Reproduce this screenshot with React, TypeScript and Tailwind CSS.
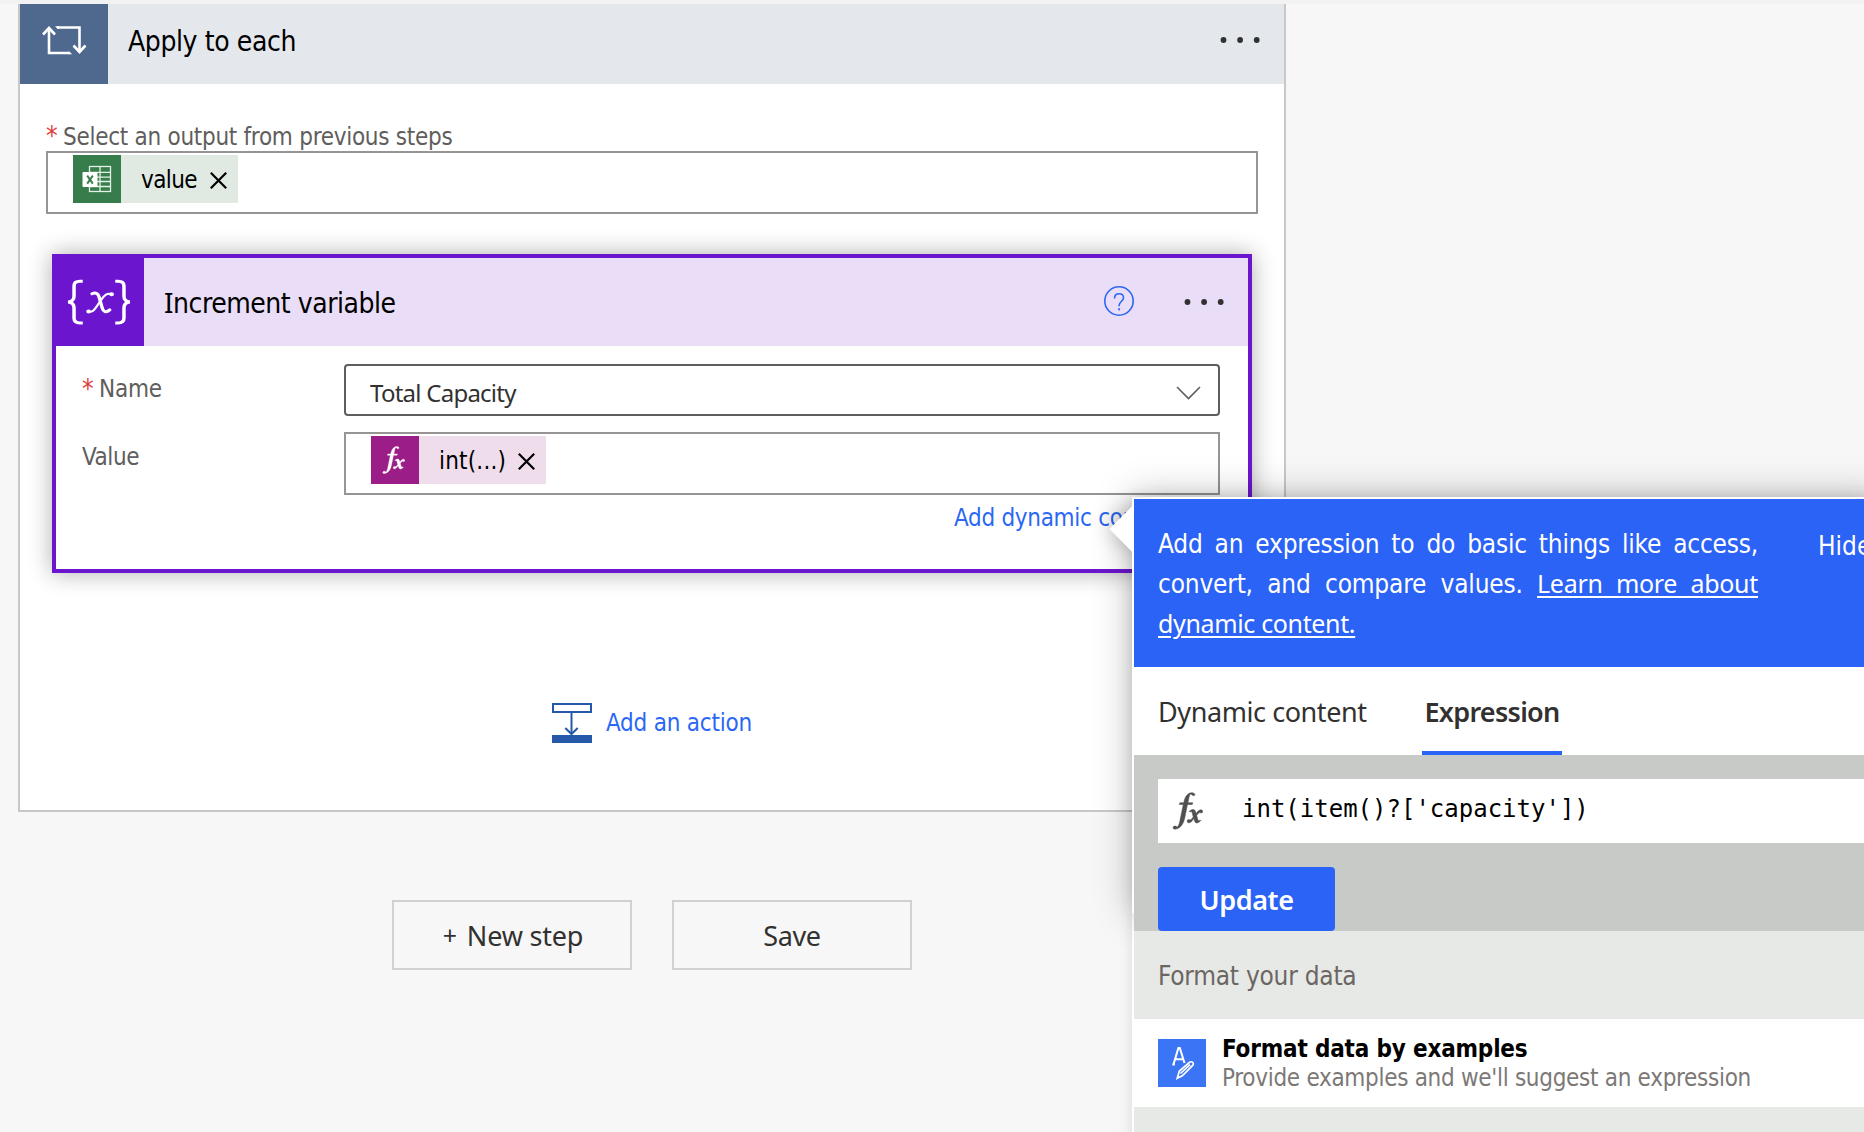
import React from "react";

const tahoma = "font-['DejaVu_Sans_Condensed','DejaVu_Sans',sans-serif] [font-stretch:condensed]";
const segoe = "font-['Noto_Sans','Open_Sans',sans-serif]";

function Dots({ className }: { className: string }) {
  return (
    <svg width="40" height="6" viewBox="0 0 40 6" className={className}>
      <circle cx="3.5" cy="3" r="2.9" />
      <circle cx="20.1" cy="3" r="2.9" />
      <circle cx="36.7" cy="3" r="2.9" />
    </svg>
  );
}

function Cross() {
  return (
    <svg width="17" height="17" viewBox="0 0 17 17" stroke="#000" strokeWidth="2.2" fill="none">
      <path d="M.8.8l15.4 15.4M16.2.8L.8 16.2" />
    </svg>
  );
}

function LoopIcon() {
  return (
    <svg width="46" height="30" viewBox="0 0 46 30" fill="none" stroke="#fff" strokeWidth="2.6">
      <path d="M8 3v25h20.500" />
      <path d="M27 26.700h1.500l2.800 2.600H27z" fill="#fff" stroke="none" />
      <path d="M2 9.500l6-6.500 6 6.500" />
      <path d="M16 2.500h22.500V26" />
      <path d="M14 1.200h4v2.600h-1.500z" fill="#fff" stroke="none" />
      <path d="M32.500 20.500l6 6.500 6-6.500" />
    </svg>
  );
}

function ExcelIcon() {
  return (
    <svg width="30" height="28" viewBox="0 0 30 28">
      <g fill="none" stroke="#e3f1e6" strokeWidth="1.3">
        <rect x="7.500" y="1.500" width="21" height="25" />
        <path d="M18 1.500v25M7.500 7.300h21M7.500 12.200h21M7.500 16.500h21M7.500 21.500h21" />
      </g>
      <rect x="0.500" y="7" width="15" height="15" rx="0.800" fill="#fff" />
      <path d="M5.200 10.600l5.600 8M10.800 10.600l-5.600 8" stroke="#377d4b" strokeWidth="1.900" />
    </svg>
  );
}

function VariableIcon() {
  return (
    <svg width="72" height="48" viewBox="0 0 62 48" preserveAspectRatio="none" fill="none" stroke="#fff">
      <g strokeWidth="3">
        <path d="M17 3.200h-2.500c-3.500 0-5 1.700-5 4.700v10.300c0 3.200-1.600 5.200-5 5.700 3.400.500 5 2.600 5 5.800v10.300c0 3 1.500 4.900 5 4.900H17" />
        <path d="M45 3.200h2.500c3.500 0 5 1.700 5 4.700v10.300c0 3.200 1.600 5.200 5 5.700-3.400.500-5 2.600-5 5.800v10.300c0 3-1.500 4.900-5 4.900H45" />
      </g>
      <g strokeLinecap="round">
        <path d="M25 15.800c3-1.600 5-.6 6 2.900l2.800 11.500c.9 3.500 3 5 6.500 1.700" strokeWidth="2.900" />
        <path d="M41.500 16c-3-1-5.300.4-7.800 4.500l-5 8.500c-2.300 4-4.500 5.300-6.500 4.500" strokeWidth="2" />
        <path d="M41.800 16.200h.1M22 33.500h.1" strokeWidth="4" />
      </g>
    </svg>
  );
}

function Fx({ color, size }: { color: string; size: number }) {
  return (
    <svg width={size} height={(size * 36) / 30} viewBox="0 0 30 36" fill={color} stroke={color} strokeWidth="0.5">
      <path d="M22.300 2.300C21 .3 17.800.2 15.300 2.200c-2.200 1.800-3.200 4.700-4 8.200H7.600l-.5 1.700h3.800L7.700 27.600c-.7 3.500-1.500 5.700-2.800 6.500-.4-1.600-3.600-1.700-3.900.3-.2 1.300 1.300 1.900 2.900 1.500 4.800-1.200 7.300-5.500 8.400-10.800L15 12.100h4.600l.5-1.700h-4.700l.8-3.900c.6-2.900 1.200-4.600 2.500-4.500.3 1.600 3.300 2.200 3.600.3z" />
      <path d="M16.800 18.600c2.300-2 5-2.500 6 .4l.6 1.900c1.700-2.600 3-3.700 4.800-3.600 1.900.2 2 2.700.3 3-1 .1-1.300-.6-2-.3-.9.400-1.700 1.300-2.600 2.700l1.200 4.100c.3 1.100.9 1.300 2.200.2l.6.700c-2.400 2.700-5.200 3.300-6.200.1l-.7-2.200c-1.500 2.700-2.900 4.300-4.800 4.200-2-.1-2-2.900-.1-3.100.9-.1 1.200.5 1.900.2.800-.3 1.700-1.500 2.500-2.900l-1-3.900c-.3-1.400-1.100-1.500-2.200-.7z" />
    </svg>
  );
}

function AddActionIcon() {
  return (
    <svg width="40" height="40" viewBox="0 0 40 40" fill="none" stroke="#2558a8">
      <rect x="1" y="1" width="38" height="8" strokeWidth="2" />
      <path d="M19.500 9v22" strokeWidth="2" />
      <path d="M13.300 25l6.200 6 6.200-6" strokeWidth="2" />
      <path d="M0 36h40" strokeWidth="8" />
    </svg>
  );
}

function HelpIcon() {
  return (
    <svg width="30" height="30" viewBox="0 0 30 30" fill="none" stroke="#2b67f5">
      <circle cx="15" cy="15" r="14.200" strokeWidth="1.600" />
      <path d="M10.600 12.500V12c0-2.700 1.900-4.300 4.500-4.300s4.400 1.600 4.400 4c0 3.500-4.400 4.100-4.400 7.700v.8" strokeWidth="1.600" />
      <path d="M15.100 22.300v2" strokeWidth="2" />
    </svg>
  );
}

function FormatIcon() {
  return (
    <svg width="48" height="48" viewBox="0 0 48 48" fill="none" stroke="#fff" strokeWidth="2">
      <path d="M14.300 25.400h2.600M15.500 25.400L20.400 9h1.400l4.700 15M17.200 20.300h8" />
      <path d="M19.200 39.300l2.200-7.200L31.600 23.300c2.400-1.500 4.700.6 3.300 2.900L24.600 36.500l-5.400 2.800zM22.500 34.500L32 25.600" strokeWidth="1.700" />
    </svg>
  );
}

function Token({ icon, label, iconBg, bg, gap }: { icon: React.ReactNode; label: React.ReactNode; iconBg: string; bg: string; gap: string }) {
  return (
    <div className={`flex h-12 items-center ${bg}`}>
      <div className={`flex h-12 w-12 items-center justify-center ${iconBg}`}>{icon}</div>
      <div className={`flex items-center ${gap}`}>{label}<div className="pt-[3px]"><Cross /></div></div>
    </div>
  );
}

function Required() {
  return <span className="w-[13px] text-[26px] text-[#e23b3b]">*</span>;
}

function IncrementCard() {
  return (
    <div className="ml-8 mt-10 h-[319px] w-[1200px] border-4 border-[#6b16ce] bg-white shadow-[0_0_22px_rgba(0,0,0,0.32)]">
      <div className="flex h-[88px] bg-[#eaddf7]">
        <div className="flex w-[88px] items-center justify-center bg-[#6b16ce] pr-[2px]"><VariableIcon /></div>
        <div className={`${tahoma} flex flex-1 items-center pl-5 pt-[3px] text-[28px] tracking-[-0.47px] text-black`}>
          <span><span className="font-['Noto_Sans'] leading-none">I</span>ncrement variable</span>
        </div>
        <div className="flex items-center gap-[50px] pr-6"><div className="pb-[2px]"><HelpIcon /></div><Dots className="fill-[#323130]" /></div>
      </div>
      <div className="flex pl-[26px] pr-7 pt-[18px]">
        <div className={`${tahoma} w-[262px] text-[24px] text-[#605e5c]`}>
          <div className="flex h-[50px] items-center gap-1"><Required /><span className="tracking-[-0.2px]">Name</span></div>
          <div className="flex h-[86px] items-center tracking-[-0.4px]">Value</div>
        </div>
        <div className="flex-1">
          <div className="flex h-[52px] items-center justify-between rounded-[4px] border-2 border-[#605e5c] pl-6 pr-[17px] pt-[6px]">
            <span className={`${segoe} text-[24px] leading-8 tracking-[-0.75px] text-[#323130]`}>Total Capacity</span>
            <svg width="25" height="14" viewBox="0 0 25 14" fill="none" stroke="#605e5c" strokeWidth="1.600"><path d="M1 1l11.500 11.500L24 1" /></svg>
          </div>
          <div className="mt-4 flex h-[63px] border-2 border-[#979593] pl-[25px] pt-[2px]">
            <Token iconBg="bg-[#9b1d87] pr-1" bg="bg-[#efddeb]" gap="gap-[12px] pl-[20px] pr-[11px]" icon={<Fx color="#fff" size={23} />}
              label={<span className={`${tahoma} pt-[1px] text-[24px] tracking-[0.2px] text-black`}>int(...)</span>} />
          </div>
          <div className={`${tahoma} whitespace-nowrap pl-[610px] pt-[7px] text-[24px] leading-8 tracking-[-0.3px] text-[#2b67f5]`}>Add dynamic content</div>
        </div>
      </div>
    </div>
  );
}

function ExpressionPanel() {
  return (
    <div className="absolute left-[1132px] top-[497px] h-[655px] w-[752px] border-l-2 border-t-2 border-white bg-[#e7e9e6] shadow-[0_0_14px_rgba(0,0,0,0.12)]">
      <div className="absolute -left-0.5 -top-0.5 h-[416px] w-[752px] shadow-[0_0_36px_rgba(0,0,0,0.28)]" />
      <div className="absolute left-[-18px] top-[14px] h-8 w-8 rotate-45 bg-white shadow-[0_0_22px_rgba(0,0,0,0.3)]" />
      <div className="absolute -left-0.5 top-0 h-24 w-8 bg-white" />
      <div className="relative flex h-[168px] items-start bg-[#2b63f6] pl-6 pt-[25px] text-white">
        <div className={`${tahoma} w-[600px] shrink-0 text-[26px] leading-[40px] tracking-[-0.2px]`}>
          <div className="h-10 [text-align-last:justify]">Add an expression to do basic things like access,</div>
          <div className="h-10 [text-align-last:justify]">convert, and compare values. <span className={`${segoe} text-[25px] leading-none tracking-[-0.3px] underline decoration-2 underline-offset-[3px]`}>Learn more about</span></div>
          <div className="h-10"><span className={`${segoe} text-[25px] leading-none tracking-[-0.35px] underline decoration-2 underline-offset-[3px]`}>dynamic content.</span></div>
        </div>
        <div className={`${tahoma} ml-[60px] mt-[2px] text-[26px] leading-[40px]`}>Hide</div>
      </div>
      <div className={`${segoe} relative flex h-[88px] bg-white pl-6 text-[27px] text-[#323130]`}>
        <div className="flex w-[264px] items-center pt-[2px] tracking-[-0.42px]">Dynamic content</div>
        <div className="flex w-[140px] items-center justify-center border-b-4 border-[#2b63f6] pt-[6px] font-semibold tracking-[-0.7px]">Expression</div>
      </div>
      <div className="relative h-[176px] bg-[#c8cac7] pl-6 pt-6">
        <div className="flex h-16 items-center bg-white pl-[14px]">
          <Fx color="#505050" size={31} />
          <span className="pb-[5px] pl-[39px] font-['DejaVu_Sans_Mono',monospace] text-[24px] text-black">int(item()?['capacity'])</span>
        </div>
        <div className={`${segoe} mt-6 flex h-16 w-[177px] items-center justify-center rounded-[4px] bg-[#2b63f6] pt-[2px] text-[27px] font-semibold tracking-[-0.4px] text-white`}>Update</div>
      </div>
      <div className={`${tahoma} relative flex h-[88px] items-center bg-[#e7e9e6] pl-6 pt-[2px] text-[26px] tracking-[-0.25px] text-[#6b6663]`}>Format your data</div>
      <div className="relative flex h-[88px] items-start bg-white pl-6 pt-5">
        <div className="h-12 w-12 bg-[#3b74f5]"><FormatIcon /></div>
        <div className={`${tahoma} pl-4 text-[24px] leading-[29px]`}>
          <div className="-mt-[4px] font-bold tracking-[-0.18px] text-black">Format data by examples</div>
          <div className="tracking-[-0.3px] text-[#7c7876]">Provide examples and we'll suggest an expression</div>
        </div>
      </div>
    </div>
  );
}

export default function App() {
  return (
    <div className="relative h-[1132px] w-[1864px] overflow-hidden border-t-4 border-[#f2f2f2] bg-[#f7f7f7]">
      <div className="ml-[18px] h-[808px] w-[1268px] border-x-2 border-b-2 border-[#c8c8c8] bg-white">
        <div className="flex h-20 bg-[#e4e7ec]">
          <div className="flex w-[88px] items-start justify-center bg-[#4e688e] pt-[21px]"><LoopIcon /></div>
          <div className={`${tahoma} flex-1 pl-5 pt-[18px] text-[28px] leading-10 tracking-[-0.4px] text-black`}>Apply to each</div>
          <Dots className="mr-6 mt-[33px] fill-[#323130]" />
        </div>
        <div className="px-[26px] pt-[36px]">
          <div className={`${tahoma} flex h-[31px] items-center gap-1 pt-[2px] text-[24px] text-[#605e5c]`}><Required /><span className="tracking-[-0.28px]">Select an output from previous steps</span></div>
          <div className="flex h-[63px] border-2 border-[#979593] pl-[25px] pt-[2px]">
            <Token iconBg="bg-[#377d4b]" bg="bg-[#e0eae2]" gap="gap-[13px] pl-5 pr-[11px]" icon={<ExcelIcon />}
              label={<span className={`${tahoma} pt-[1px] text-[24px] tracking-[-0.6px] text-black`}>value</span>} />
          </div>
        </div>
        <IncrementCard />
        <div className="mt-[130px] flex items-center gap-[14px] pl-[532px]">
          <AddActionIcon />
          <span className={`${tahoma} text-[24px] leading-8 tracking-[-0.23px] text-[#2b67f5]`}>Add an action</span>
        </div>
      </div>
      <div className={`${segoe} ml-[392px] mt-[88px] flex gap-10 text-[27px] text-[#323130]`}>
        <div className="flex h-[70px] w-60 items-center justify-center gap-[10px] border-2 border-[#d1d1d1] pl-[2px] pt-[2px] tracking-[-0.2px]"><span className="text-[25px]">+</span><span>New step</span></div>
        <div className="flex h-[70px] w-60 items-center justify-center border-2 border-[#d1d1d1] pt-[2px] tracking-[-0.4px]">Save</div>
      </div>
      <div className="absolute inset-x-0 -top-1"><ExpressionPanel /></div>
    </div>
  );
}
